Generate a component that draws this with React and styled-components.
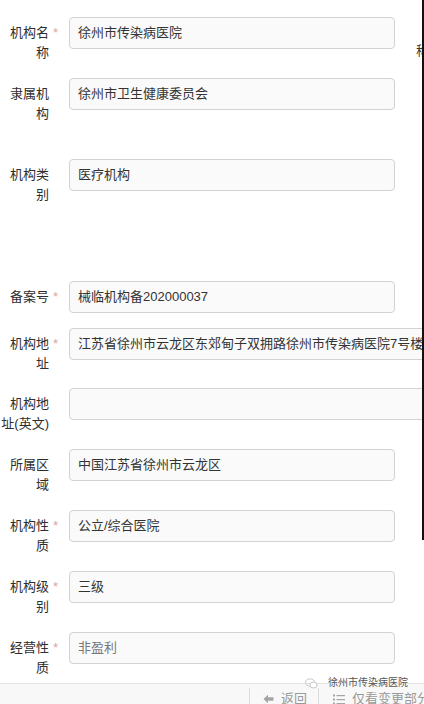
import React from "react";
import styled, { createGlobalStyle } from "styled-components";

const Global = createGlobalStyle`
  html, body { margin: 0; padding: 0; background: #fff; }
  body { font-family: "Liberation Sans", "Noto Sans CJK SC", sans-serif; }
`;

const Page = styled.div`
  position: relative;
  width: 424px;
  height: 704px;
  overflow: hidden;
  display: flex;
  flex-direction: column;
  background: #fff;
`;

const Main = styled.div`
  display: flex;
  flex: none;
`;

const Form = styled.div`
  width: 422px;
  flex: none;
  display: flex;
  flex-direction: column;
  padding-top: 17px;
  box-sizing: border-box;
  overflow: hidden;
`;

const Edge = styled.div`
  width: 2px;
  flex: none;
  height: ${(p) => p.$h}px;
  background: #111;
`;

const Row = styled.div`
  display: flex;
  align-items: flex-start;
  margin-top: ${(p) => p.$gap || 0}px;
  margin-bottom: ${(p) => (p.$mb !== undefined ? p.$mb : 15)}px;
`;

const Label = styled.div`
  position: relative;
  flex: none;
  width: 49px;
  padding-top: 6px;
  text-align: right;
  font-size: 13px;
  line-height: 20px;
  color: #2e2e2e;
  word-break: break-all;
`;

const Req = styled.span`
  position: absolute;
  left: 53px;
  top: 6px;
  font-size: 13px;
  line-height: 20px;
  color: #dda4a4;
`;

const Field = styled.div`
  flex: none;
  margin-left: 20px;
  width: ${(p) => (p.$wide ? 420 : 326)}px;
  height: 32px;
  box-sizing: border-box;
  border: 1px solid #d2d2d2;
  border-radius: 4px;
  background: #fafafa;
  padding: 0 8px;
  font-size: 13px;
  line-height: 30px;
  color: ${(p) => (p.$muted ? "#777" : "#333")};
  white-space: nowrap;
  overflow: hidden;
`;

const SideLabel = styled.div`
  flex: none;
  margin-left: 21px;
  padding-top: 24px;
  font-size: 13px;
  line-height: 20px;
  color: #333;
`;

const Bar = styled.div`
  flex: 1;
  display: flex;
  border-top: 1px solid #e2e2e2;
  background: #f8f8f8;
`;

const Actions = styled.div`
  display: flex;
  margin-left: 249px;
  align-items: flex-start;
`;

const BarButton = styled.div`
  display: flex;
  align-items: center;
  gap: 7px;
  margin-top: 4px;
  height: 30px;
  box-sizing: border-box;
  border-left: 1px solid #dcdcdc;
  padding-left: ${(p) => p.$pl}px;
  width: ${(p) => (p.$w ? `${p.$w}px` : "auto")};
  font-size: 13px;
  line-height: 22px;
  color: #9a9a9a;
  white-space: nowrap;
  padding-bottom: 8px;
`;

const Watermark = styled.div`
  position: absolute;
  left: 305px;
  top: 676px;
  display: flex;
  align-items: center;
  gap: 10px;
  font-size: 10px;
  line-height: 14px;
  color: #555;
  text-shadow: 0 0 2px #fff, 0 0 2px #fff;
`;

const ArrowLeft = () => (
  <svg width="11" height="10" viewBox="0 0 11 10">
    <path d="M0.5 5 L5 0.8 L5 3.3 L10.5 3.3 L10.5 6.7 L5 6.7 L5 9.2 Z" fill="#a5a5a5" />
  </svg>
);

const ListIcon = () => (
  <svg width="12" height="11" viewBox="0 0 12 11">
    <rect x="0" y="0.5" width="2" height="2" fill="#a5a5a5" />
    <rect x="0" y="4.5" width="2" height="2" fill="#a5a5a5" />
    <rect x="0" y="8.5" width="2" height="2" fill="#a5a5a5" />
    <rect x="3.5" y="1" width="8.5" height="1.2" fill="#a5a5a5" />
    <rect x="3.5" y="5" width="8.5" height="1.2" fill="#a5a5a5" />
    <rect x="3.5" y="9" width="8.5" height="1.2" fill="#a5a5a5" />
  </svg>
);

const WxIcon = () => (
  <svg width="13" height="11" viewBox="0 0 13 11">
    <ellipse cx="5" cy="4.5" rx="4.3" ry="3.6" fill="none" stroke="#c8c8c8" strokeWidth="1" />
    <ellipse cx="8.5" cy="7" rx="3.6" ry="3" fill="#fff" stroke="#c8c8c8" strokeWidth="1" />
  </svg>
);

const rows = [
  { label: "机构名称", req: true, value: "徐州市传染病医院", side: "称" },
  { label: "隶属机构", value: "徐州市卫生健康委员会" },
  { label: "机构类别", value: "医疗机构", gap: 20 },
  { label: "备案号", req: true, value: "械临机构备202000037", gap: 61 },
  { label: "机构地址", req: true, value: "江苏省徐州市云龙区东郊甸子双拥路徐州市传染病医院7号楼", wide: true },
  { label: "机构地址(英文)", value: "", wide: true, gap: -1 },
  { label: "所属区域", value: "中国江苏省徐州市云龙区" },
  { label: "机构性质", req: true, value: "公立/综合医院" },
  { label: "机构级别", req: true, value: "三级" },
  { label: "经营性质", req: true, value: "非盈利", muted: true, mb: 5 },
];

export default function App() {
  return (
    <>
      <Global />
      <Page>
        <Main>
          <Form>
            {rows.map((r) => (
              <Row key={r.label} $gap={r.gap} $mb={r.mb}>
                <Label>
                  {r.label}
                  {r.req && <Req>*</Req>}
                </Label>
                <Field $wide={r.wide} $muted={r.muted}>
                  {r.value}
                </Field>
                {r.side && <SideLabel>{r.side}</SideLabel>}
              </Row>
            ))}
          </Form>
          <Edge $h={540} />
        </Main>
        <Bar>
          <Actions>
            <BarButton $pl={13} $w={69}>
              <ArrowLeft />
              返回
            </BarButton>
            <BarButton $pl={14}>
              <ListIcon />
              仅看变更部分
            </BarButton>
          </Actions>
        </Bar>
        <Watermark>
          <WxIcon />
          徐州市传染病医院
        </Watermark>
      </Page>
    </>
  );
}
